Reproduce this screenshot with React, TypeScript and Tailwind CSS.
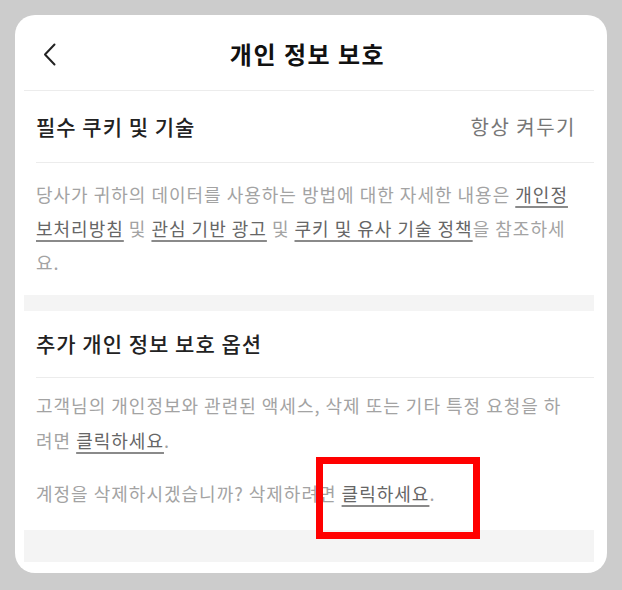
import React from 'react';

const font = { fontFamily: '"Noto Sans CJK KR", "Noto Sans", sans-serif' };

const Link = ({ children }: { children: React.ReactNode }) => (
  <span className="text-[#666] underline underline-offset-[4px] decoration-[1.5px] decoration-[#8a8a8a]">{children}</span>
);

export default function App() {
  return (
    <div style={font} className="relative min-h-screen bg-[#cccccc] px-[15px] pt-[15px] pb-[16px]">
      <div className="bg-white rounded-[20px] pl-[9px] pr-[13px] pb-[11px]">
        {/* Header */}
        <div className="grid grid-cols-[1fr_auto_1fr] items-center h-[76px] border-b border-[#ececec]">
          <div className="pl-[19px] pt-[3px]">
            <svg width="13" height="23" viewBox="0 0 13 23" fill="none">
              <path d="M11.5 1.5 L2 11.5 L11.5 21.5" stroke="#222" strokeWidth="2" strokeLinecap="round" strokeLinejoin="round" />
            </svg>
          </div>
          <h1 className="text-[24px] font-bold text-[#111] tracking-[1.5px] -ml-[3px] pt-[3px]">개인 정보 보호</h1>
          <div />
        </div>

        {/* Essential cookies */}
        <div className="ml-[12px] h-[72px] flex items-center justify-between border-b border-[#ececec] pr-[18px]">
          <span className="text-[21px] font-medium text-[#222] tracking-[1px]">필수 쿠키 및 기술</span>
          <span className="text-[20px] text-[#777] tracking-[1.5px]">항상 켜두기</span>
        </div>
        <p className="pl-[12px] pr-[18px] pt-[14px] pb-[16px] text-[18px] leading-[34px] tracking-[1px] text-[#a3a3a3]">
          당사가 귀하의 데이터를 사용하는 방법에 대한 자세한 내용은 <Link>개인정보처리방침</Link> 및 <Link>관심 기반 광고</Link> 및 <Link>쿠키 및 유사 기술 정책</Link>을 참조하세요.
        </p>
        <div className="h-[16px] bg-[#f4f4f4]" />

        {/* Additional options */}
        <div className="ml-[12px] h-[67px] flex items-center border-b border-[#ececec]">
          <span className="text-[21px] font-medium text-[#222] tracking-[1px]">추가 개인 정보 보호 옵션</span>
        </div>
        <div className="pl-[12px] pr-[18px] pt-[10px] pb-[19px] text-[18px] leading-[35px] tracking-[1px] text-[#a3a3a3] flex flex-col gap-[18px]">
          <p>
            고객님의 개인정보와 관련된 액세스, 삭제 또는 기타 특정 요청을 하려면 <Link>클릭하세요</Link>.
          </p>
          <p>
            계정을 삭제하시겠습니까? 삭제하려면 <Link>클릭하세요</Link>.
          </p>
        </div>
        <div className="h-[32px] bg-[#f4f4f4]" />
      </div>

      {/* highlight annotation */}
      <div className="absolute left-[316px] top-[457px] w-[164px] h-[82px] border-[7px] border-[#ff0000]" />
    </div>
  );
}
